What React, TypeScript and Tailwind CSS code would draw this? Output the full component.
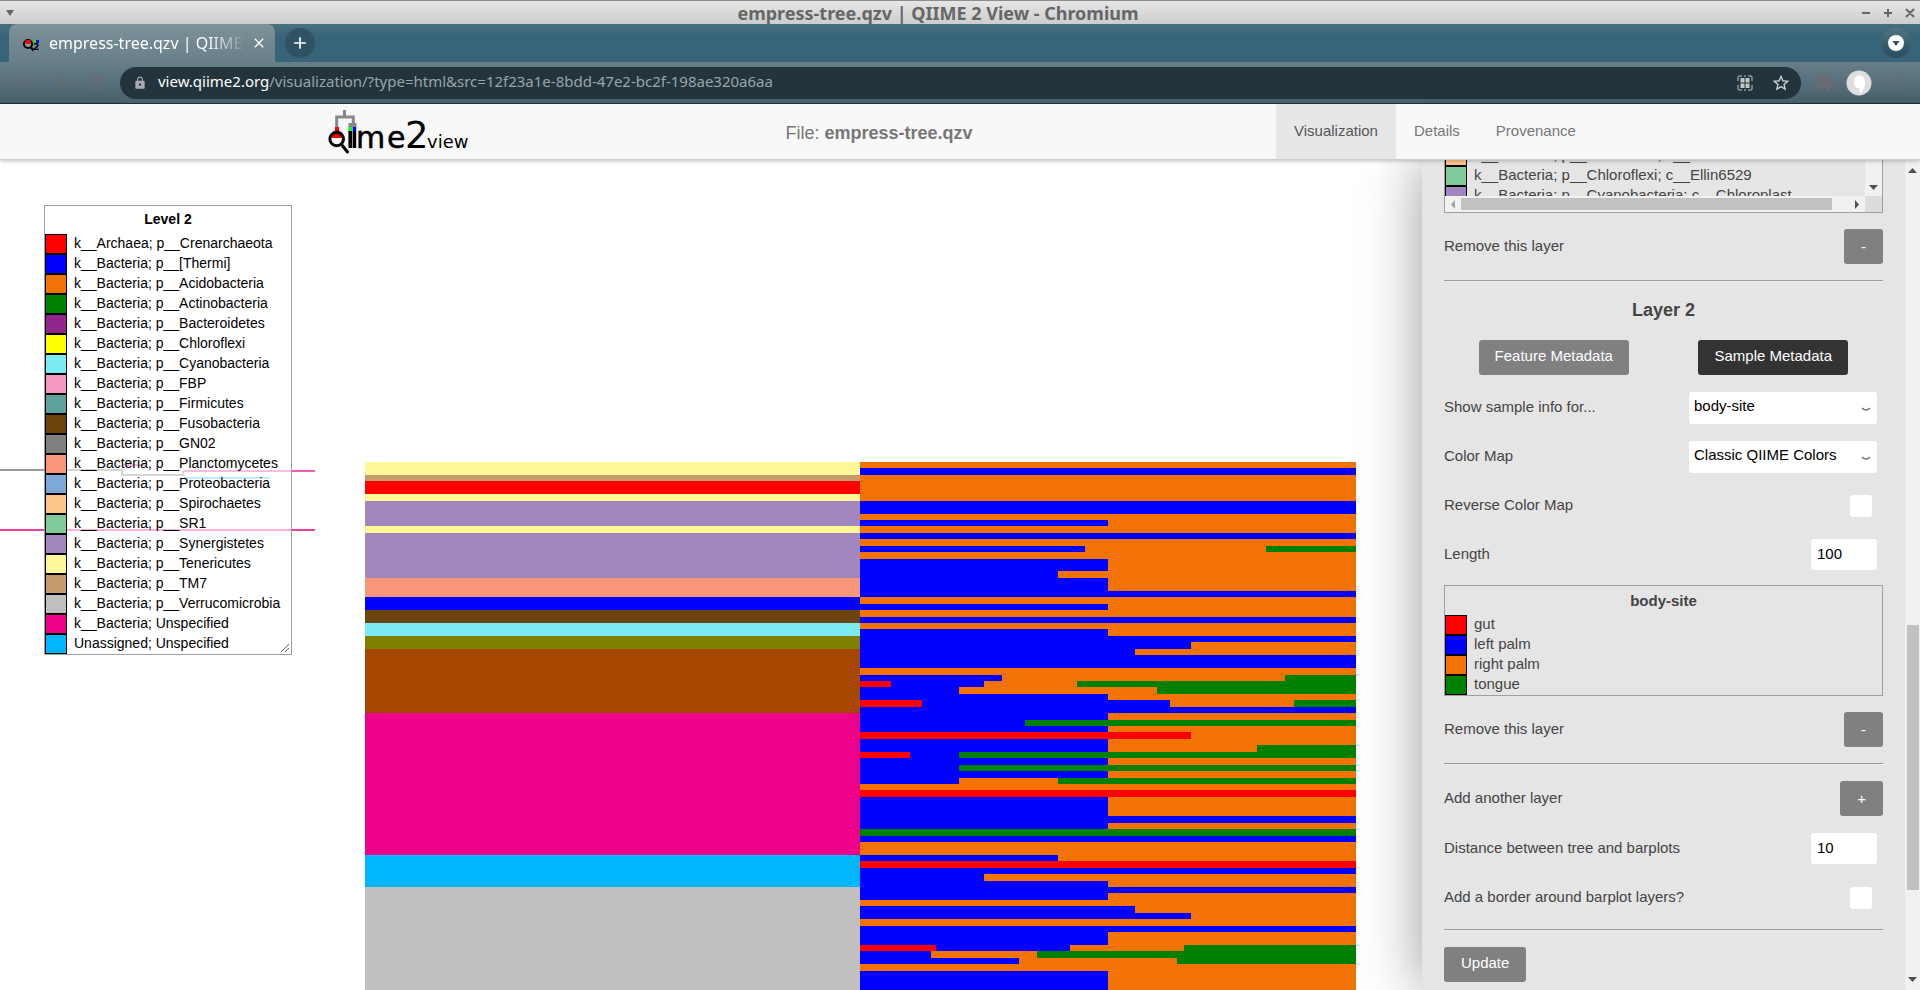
import { Fragment, useId } from 'react';
import type { ReactNode } from 'react';
import {
  MdAdd,
  MdArrowBack,
  MdArrowForward,
  MdClose,
  MdExtension,
  MdLock,
  MdMoreVert,
  MdRefresh,
  MdStarBorder,
} from 'react-icons/md';

type LegendItem = { color: string; label: string };

const LEVEL_2: LegendItem[] = [
  { color: '#ff0000', label: 'k__Archaea; p__Crenarchaeota' },
  { color: '#0000ff', label: 'k__Bacteria; p__[Thermi]' },
  { color: '#f27304', label: 'k__Bacteria; p__Acidobacteria' },
  { color: '#008000', label: 'k__Bacteria; p__Actinobacteria' },
  { color: '#91278d', label: 'k__Bacteria; p__Bacteroidetes' },
  { color: '#ffff00', label: 'k__Bacteria; p__Chloroflexi' },
  { color: '#7cecf4', label: 'k__Bacteria; p__Cyanobacteria' },
  { color: '#f49ac2', label: 'k__Bacteria; p__FBP' },
  { color: '#5da09e', label: 'k__Bacteria; p__Firmicutes' },
  { color: '#6b440b', label: 'k__Bacteria; p__Fusobacteria' },
  { color: '#808080', label: 'k__Bacteria; p__GN02' },
  { color: '#f79679', label: 'k__Bacteria; p__Planctomycetes' },
  { color: '#7da9d8', label: 'k__Bacteria; p__Proteobacteria' },
  { color: '#fcc688', label: 'k__Bacteria; p__Spirochaetes' },
  { color: '#80c99b', label: 'k__Bacteria; p__SR1' },
  { color: '#a287bf', label: 'k__Bacteria; p__Synergistetes' },
  { color: '#fff899', label: 'k__Bacteria; p__Tenericutes' },
  { color: '#c49c6b', label: 'k__Bacteria; p__TM7' },
  { color: '#c0c0c0', label: 'k__Bacteria; p__Verrucomicrobia' },
  { color: '#ed008a', label: 'k__Bacteria; Unspecified' },
  { color: '#00b6ff', label: 'Unassigned; Unspecified' },
];

const LAYER_1: LegendItem[] = [
  { color: '#fcc688', label: 'k__Bacteria; p__Chloroflexi; c__Anaerolineae' },
  { color: '#80c99b', label: 'k__Bacteria; p__Chloroflexi; c__Ellin6529' },
  { color: '#a287bf', label: 'k__Bacteria; p__Cyanobacteria; c__Chloroplast' },
];

const BODY_SITES: LegendItem[] = [
  { color: '#ff0000', label: 'gut' },
  { color: '#0000ff', label: 'left palm' },
  { color: '#f27304', label: 'right palm' },
  { color: '#008000', label: 'tongue' },
];

// [color, number of tips]
const FEATURE_BARS: [string, number][] = [
  ['#fff899', 2],
  ['#c49c6b', 1],
  ['#ff0000', 2],
  ['#fff899', 1],
  ['#a287bf', 4],
  ['#fff899', 1],
  ['#a287bf', 7],
  ['#f79679', 3],
  ['#0000ff', 2],
  ['#6b440b', 2],
  ['#7cecf4', 2],
  ['#808000', 2],
  ['#a54700', 10],
  ['#ed008a', 22],
  ['#00b6ff', 5],
  ['#c0c0c0', 30],
];

const SITE_COLORS: Record<string, string> = {
  R: '#ff0000',
  B: '#0000ff',
  O: '#f27304',
  G: '#008000',
};

// One entry per run of equal tips: [tips, [site, end fraction]...]
type SampleRun = [number, ...[string, number][]];

const SAMPLE_BARS: SampleRun[] = [
  [1, ['O', 1]],
  [1, ['B', 1]],
  [4, ['O', 1]],
  [2, ['B', 1]],
  [1, ['O', 1]],
  [1, ['B', 0.5], ['O', 1]],
  [1, ['O', 1]],
  [1, ['B', 1]],
  [1, ['O', 1]],
  [1, ['B', 0.4545], ['O', 0.8182], ['G', 1]],
  [1, ['O', 1]],
  [2, ['B', 0.5], ['O', 1]],
  [1, ['B', 0.4], ['O', 1]],
  [2, ['B', 0.5], ['O', 1]],
  [1, ['B', 1]],
  [1, ['O', 1]],
  [1, ['B', 0.5], ['O', 1]],
  [1, ['O', 1]],
  [1, ['B', 1]],
  [1, ['O', 1]],
  [1, ['B', 0.5], ['O', 1]],
  [1, ['B', 1]],
  [1, ['B', 0.6667], ['O', 1]],
  [1, ['B', 0.5556], ['O', 1]],
  [2, ['B', 1]],
  [1, ['O', 1]],
  [1, ['B', 0.2857], ['O', 0.8571], ['G', 1]],
  [1, ['R', 0.0625], ['B', 0.25], ['O', 0.4375], ['G', 1]],
  [1, ['B', 0.2], ['O', 0.6], ['G', 1]],
  [1, ['B', 0.5], ['O', 1]],
  [1, ['R', 0.125], ['B', 0.625], ['O', 0.875], ['G', 1]],
  [1, ['B', 1]],
  [1, ['B', 0.5], ['O', 1]],
  [1, ['B', 0.3333], ['G', 1]],
  [1, ['B', 0.5], ['O', 1]],
  [1, ['R', 0.6667], ['O', 1]],
  [1, ['B', 0.5], ['O', 1]],
  [1, ['B', 0.5], ['O', 0.8], ['G', 1]],
  [1, ['R', 0.1], ['B', 0.2], ['G', 1]],
  [1, ['B', 0.5], ['O', 1]],
  [1, ['B', 0.2], ['G', 1]],
  [1, ['B', 0.5], ['O', 1]],
  [1, ['B', 0.2], ['O', 0.4], ['G', 1]],
  [1, ['O', 1]],
  [1, ['R', 1]],
  [3, ['B', 0.5], ['O', 1]],
  [1, ['B', 1]],
  [1, ['B', 0.5], ['O', 1]],
  [1, ['G', 1]],
  [1, ['B', 1]],
  [2, ['O', 1]],
  [1, ['B', 0.4], ['O', 1]],
  [1, ['R', 1]],
  [1, ['B', 1]],
  [1, ['B', 0.25], ['O', 1]],
  [1, ['B', 0.5], ['O', 1]],
  [1, ['B', 1]],
  [1, ['B', 0.5], ['O', 1]],
  [1, ['O', 1]],
  [1, ['B', 0.5556], ['O', 1]],
  [1, ['B', 0.6667], ['O', 1]],
  [1, ['O', 1]],
  [1, ['B', 1]],
  [2, ['B', 0.5], ['O', 1]],
  [1, ['R', 0.1538], ['B', 0.4231], ['O', 0.6538], ['G', 1]],
  [1, ['B', 0.1429], ['O', 0.3571], ['G', 1]],
  [1, ['B', 0.32], ['O', 0.64], ['G', 1]],
  [1, ['O', 1]],
  [16, ['B', 0.5], ['O', 1]],
];

const TIP_HEIGHT = 6.44;
const BAR_TOP = 302;
const BAR_LEFT = 365;
const BAR_WIDTH = 495.3;

const TreeCanvas = () => {
  let featureRow = 0;
  let sampleRow = 0;

  return (
    <svg className="absolute inset-0 w-full h-full" shapeRendering="crispEdges" aria-label="Phylogenetic tree with barplots">
      <g fill="none" strokeWidth="2">
        <path d="M0 310h122v5h61v-4" stroke="#999" />
        <path d="M123 305h22M183 311h132" stroke="#f45db0" />
        <path d="M184 318h86" stroke="#5fd0f7" />
        <path d="M0 370h315" stroke="#ee3fa5" />
      </g>
      {FEATURE_BARS.map(([color, tips], i) => {
        const y = BAR_TOP + featureRow * TIP_HEIGHT;
        featureRow += tips;
        return <rect key={i} x={BAR_LEFT} y={y} width={BAR_WIDTH} height={tips * TIP_HEIGHT} fill={color} />;
      })}
      {SAMPLE_BARS.map(([tips, ...parts], i) => {
        const y = BAR_TOP + sampleRow * TIP_HEIGHT;
        sampleRow += tips;
        let start = 0;
        return (
          <Fragment key={i}>
            {parts.map(([site, end]) => {
              const x = BAR_LEFT + BAR_WIDTH + start * BAR_WIDTH;
              const width = (end - start) * BAR_WIDTH;
              start = end;
              return <rect key={site} x={x} y={y} width={width} height={tips * TIP_HEIGHT} fill={SITE_COLORS[site]} />;
            })}
          </Fragment>
        );
      })}
    </svg>
  );
};

const LegendRows = ({ items }: { items: LegendItem[] }) => (
  <ul>
    {items.map((item) => (
      <li key={item.label} className="flex gap-[7px] h-5 leading-[18px] whitespace-nowrap">
        <span className="w-[22px] h-5 shrink-0 border border-black" style={{ backgroundColor: item.color }} />
        {item.label}
      </li>
    ))}
  </ul>
);

const QiimeLogo = () => (
  <svg width="140" height="48" viewBox="0 0 140 48" aria-label="QIIME 2 view">
    <path d="M16.500 2v7M8.700 22V9h16.600v9" fill="none" stroke="#888" strokeWidth="3" />
    <path d="M20.500 15h8v4h-8z" fill="#888" />
    <path d="M7 19h4v5h3v6H4v-6h3z" fill="#f00" />
    <circle cx="8.700" cy="31" r="6.800" fill="none" stroke="#000" strokeWidth="3" />
    <path d="M13.500 36.500l6 7.500" stroke="#000" strokeWidth="3" strokeLinecap="round" />
    <path d="M20.400 19h3.600v4h-3.600z" fill="#0f0" />
    <path d="M24.600 19h3.600v4h-3.600z" fill="#00f" />
    <path d="M20.400 23h3.600v17h-3.600zM24.600 23h3.600v17h-3.600z" fill="#000" />
    <g fontFamily="'DejaVu Sans', sans-serif" fill="#000">
      <text x="28" y="40" fontSize="30" stroke="#000" strokeWidth="0.500">m</text>
      <text x="59" y="40" fontSize="30" stroke="#000" strokeWidth="0.500">e</text>
      <text x="77" y="40" fontSize="37">2</text>
      <text x="99" y="40" fontSize="18">view</text>
    </g>
  </svg>
);

const Favicon = () => (
  <svg width="18" height="20" viewBox="0 0 18 20" aria-hidden="true">
    <path d="M4 6V2h9v5" fill="none" stroke="#888" />
    <circle cx="6" cy="11" r="4" fill="#8d9ca3" stroke="#000" strokeWidth="2" />
    <path d="M3.500 7h5v4h-5z" fill="#f00" />
    <path d="M8.500 14l3 3.500" stroke="#000" strokeWidth="2" />
    <path d="M11.500 7h2.500v3h-2.500z" fill="#0f0" />
    <path d="M14 7h3v3h-3z" fill="#00f" />
    <text x="11" y="17" fontSize="9" fontWeight="700" fontFamily="DejaVu Sans">2</text>
  </svg>
);

const WindowTitleBar = () => (
  <div className="flex items-center h-6 px-[5px] border-t border-[#8f8b90] bg-linear-to-b from-[#e6e6e6] to-[#cdcdcd] text-[#666]">
    <svg className="w-[10px] h-[6px]" viewBox="0 0 10 6" aria-hidden="true">
      <path d="M1 0h8L5 6z" fill="#666" />
    </svg>
    <span className="flex-1 text-center font-['Noto_Sans'] text-[18px] leading-5 font-bold">
      empress-tree.qzv | QIIME 2 View - Chromium
    </span>
    <svg className="w-[54px] h-[10px]" viewBox="0 0 54 10" aria-hidden="true">
      <path d="M1 5h8M23 5h8M27 1v8M45 1l8 8M53 1l-8 8" stroke="#666" strokeWidth="2" />
    </svg>
  </div>
);

const TabStrip = () => (
  <div className="flex items-center h-[38px] pl-[9px] pr-[9px] bg-linear-to-b from-[#47707f] to-[#376478] to-35%">
    <div className="flex items-center w-[266px] h-full pl-[13px] pr-2 rounded-t-lg bg-linear-to-b from-[#7d9198] to-[#687f8a] text-white">
      <Favicon />
      <span className="flex-1 ml-[9px] overflow-hidden whitespace-nowrap font-['Noto_Sans'] text-[16px] mask-r-from-80%">
        empress-tree.qzv | QIIME 2 View
      </span>
      <button aria-label="Close tab" className="ml-1">
        <MdClose size={16} />
      </button>
    </div>
    <button aria-label="New tab" className="flex items-center justify-center size-[30px] ml-[10px] rounded-full bg-[#2f5364] text-white">
      <MdAdd size={20} />
    </button>
    <button aria-label="Search tabs" className="flex items-center justify-center size-[30px] ml-auto rounded-full bg-linear-to-b from-[#4f7482] to-[#294c5c]">
      <svg width="16" height="16" viewBox="0 0 16 16" aria-hidden="true">
        <circle cx="8" cy="8" r="8" fill="#fff" />
        <path d="M4.500 6h7L8 11z" fill="#2f5364" />
      </svg>
    </button>
  </div>
);

const Toolbar = () => (
  <div className="flex items-center h-[42px] pl-[14px] pr-3 border-b border-[#1f333d] bg-linear-to-b from-[#687f8a] to-[#46606b] text-[#6b6a70]">
    <div className="flex gap-4 w-[106px]">
      <button aria-label="Back"><MdArrowBack size={20} /></button>
      <button aria-label="Forward"><MdArrowForward size={20} /></button>
      <button aria-label="Reload"><MdRefresh size={20} /></button>
    </div>
    <div className="flex items-center flex-1 h-8 pl-[13px] pr-[10px] rounded-full bg-[#24343d] text-[#9aa5aa]">
      <MdLock size={14} className="text-[#a9a9b2]" />
      <span className="flex-1 ml-[11px] pb-[2px] font-['Noto_Sans'] text-[15px]">
        <span className="text-white">view.qiime2.org</span>
        /visualization/?type=html&amp;src=12f23a1e-8bdd-47e2-bc2f-198ae320a6aa
      </span>
      <svg width="16" height="16" viewBox="0 0 16 16" className="mr-[18px]" aria-hidden="true">
        <path d="M1 6V2q0-1 1-1h3M11 1h3q1 0 1 1v4M15 10v4q0 1-1 1h-3M5 15H2q-1 0-1-1v-4M7 1h2M7 15h2" fill="none" stroke="#c3c6c8" />
        <path d="M3.500 3h4v4.500h-4zM8.500 3h4v4.500h-4zM3.500 8.500h4V13h-4zM8.500 8.500h4V13h-4z" fill="#c3c6c8" />
      </svg>
      <button aria-label="Bookmark" className="text-[#d0d3d4]"><MdStarBorder size={20} /></button>
    </div>
    <button aria-label="Extensions" className="ml-[14px]"><MdExtension size={19} /></button>
    <svg width="26" height="26" viewBox="0 0 26 26" className="ml-3" aria-label="Profile">
      <circle cx="13" cy="13" r="12.500" fill="#dedede" />
      <path d="M8 12c0-9 11-9 11 0 0 5-1 9-5 11l-1-5c-3 0-5-2-5-6z" fill="#fff" />
    </svg>
    <button aria-label="Menu" className="ml-4"><MdMoreVert size={20} /></button>
  </div>
);

const PageHeader = () => (
  <header className="relative z-10 h-14 shrink-0 border-b border-[#ccc] bg-[#f8f8f8] text-[#777] shadow-[0_1px_4px_rgba(0,0,0,0.25)]">
    <div className="flex max-w-[1264px] h-full mx-auto">
      <a href="#home" className="w-[154px] pt-1"><QiimeLogo /></a>
      <p className="flex-1 self-center pt-1 text-center text-[18px]">
        File: <strong>empress-tree.qzv</strong>
      </p>
      <nav className="flex w-[316px] leading-[54px]">
        <a href="#visualization" className="px-[18px] bg-[#e7e7e7] text-[#555]">Visualization</a>
        <a href="#details" className="px-[18px]">Details</a>
        <a href="#provenance" className="px-[18px]">Provenance</a>
      </nav>
    </div>
  </header>
);

const Row = ({ label, children }: { label: string; children: (id: string) => ReactNode }) => {
  const id = useId();
  return (
    <div className="flex items-center justify-between h-[49px] pr-[6px]">
      <label htmlFor={id}>{label}</label>
      {children(id)}
    </div>
  );
};

const Dropdown = ({ id, value }: { id: string; value: string }) => (
  <div className="grid items-center">
    <select id={id} className="col-start-1 row-start-1 appearance-none w-[188px] h-8 pl-[5px] pb-[2px] rounded-[3px] bg-white text-black">
      <option>{value}</option>
    </select>
    <svg className="col-start-1 row-start-1 justify-self-end mr-[6px] mt-1 pointer-events-none" width="10" height="5" viewBox="0 0 10 5" aria-hidden="true">
      <path d="M1 1q4 4 8 0" fill="none" stroke="#777" strokeWidth="1.500" />
    </svg>
  </div>
);

const NumberBox = ({ id, value }: { id: string; value: string }) => (
  <input id={id} defaultValue={value} className="w-[66px] h-[31px] pl-[6px] pb-[2px] rounded-[3px] bg-white text-black" />
);

const Tick = ({ id }: { id: string }) => (
  <input id={id} type="checkbox" className="appearance-none size-[22px] mr-[5px] rounded-[3px] bg-white" />
);

const LayerButton = ({ text, sign }: { text: string; sign: string }) => (
  <div className="flex justify-between h-[35px] mt-4 leading-[34px]">
    <span>{text}</span>
    <button aria-label={text} className="px-[17px] rounded-[3px] bg-[#808080] text-white">{sign}</button>
  </div>
);

const Divider = () => <hr className="h-[2px] mt-4 border-0 border-t border-[#999] bg-[#eee]" />;

const SideScrollbar = () => (
  <div className="flex flex-col items-center w-[15px] shrink-0 py-2 bg-[#f1f1f1]" aria-hidden="true">
    <svg width="9" height="5" viewBox="0 0 9 5"><path d="M0 5l4.500-5L9 5z" fill="#505050" /></svg>
    <div className="grow-[452]" />
    <div className="grow-[265] w-3 bg-[#c1c1c1]" />
    <div className="grow-[87]" />
    <svg width="9" height="5" viewBox="0 0 9 5"><path d="M0 0l4.500 5L9 0z" fill="#505050" /></svg>
  </div>
);

const ListScrollbar = () => (
  <div className="flex items-center h-4 bg-[#f1f1f1]" aria-hidden="true">
    <svg width="16" height="9" viewBox="0 0 16 9"><path d="M10 0L6 4.500 10 9z" fill="#a3a3a3" /></svg>
    <div className="w-[371px] h-3 bg-[#c1c1c1]" />
    <svg className="ml-auto mr-1" width="9" height="9" viewBox="0 0 9 9"><path d="M3 0l4 4.500L3 9z" fill="#505050" /></svg>
    <div className="w-[17px] h-4 bg-[#dcdcdc]" />
  </div>
);

const SidePanel = () => (
  <aside className="relative flex w-[498px] shrink-0 bg-[#e5e5e5] text-[#444] shadow-[0_0_56px_rgba(0,0,0,0.4)]">
    <div className="flex-1 px-[22px] overflow-hidden">
      <div className="border border-t-0 border-[#a0a0a0]">
        <div className="flex justify-between h-9 overflow-hidden">
          <div className="-mt-[14px]">
            <LegendRows items={LAYER_1} />
          </div>
          <div className="flex items-end justify-center w-[17px] pb-[6px] bg-[#f1f1f1]">
            <svg width="9" height="5" viewBox="0 0 9 5" aria-hidden="true"><path d="M0 0l4.500 5L9 0z" fill="#505050" /></svg>
          </div>
        </div>
        <ListScrollbar />
      </div>

      <LayerButton text="Remove this layer" sign="-" />
      <Divider />

      <h2 className="mt-3 text-center text-[18px] leading-8 font-bold">Layer 2</h2>
      <div className="flex justify-around h-[35px] mt-[14px] mb-2 text-white">
        <button className="w-[150px] pb-[2px] rounded-[3px] bg-[#808080]">Feature Metadata</button>
        <button className="w-[150px] pb-[2px] rounded-[3px] bg-[#333]">Sample Metadata</button>
      </div>

      <Row label="Show sample info for...">{(id) => <Dropdown id={id} value="body-site" />}</Row>
      <Row label="Color Map">{(id) => <Dropdown id={id} value="Classic QIIME Colors" />}</Row>
      <Row label="Reverse Color Map">{(id) => <Tick id={id} />}</Row>
      <Row label="Length">{(id) => <NumberBox id={id} value="100" />}</Row>

      <div className="mt-[6px] border border-[#a0a0a0]">
        <h3 className="text-center leading-[29px] font-bold">body-site</h3>
        <LegendRows items={BODY_SITES} />
      </div>

      <LayerButton text="Remove this layer" sign="-" />
      <Divider />
      <LayerButton text="Add another layer" sign="+" />

      <div className="mt-2 mb-[-9px]">
        <Row label="Distance between tree and barplots">{(id) => <NumberBox id={id} value="10" />}</Row>
        <Row label="Add a border around barplot layers?">{(id) => <Tick id={id} />}</Row>
      </div>
      <Divider />
      <button className="h-[35px] mt-4 px-[17px] pb-[2px] rounded-[3px] bg-[#808080] text-white">Update</button>
    </div>
    <SideScrollbar />
  </aside>
);

export default function App() {
  return (
    <div className="flex flex-col h-screen overflow-hidden bg-white font-['Liberation_Sans',sans-serif] text-[15px]">
      <WindowTitleBar />
      <TabStrip />
      <Toolbar />
      <PageHeader />
      <div className="flex flex-1 min-h-0">
        <main className="relative flex-1 min-w-0 overflow-hidden">
          <TreeCanvas />
          <section className="absolute left-11 top-[45px] w-[248px] border border-[#a0a0a0] bg-white/60 text-[14px] text-black">
            <h2 className="h-7 text-center leading-[26px] font-bold">Level 2</h2>
            <LegendRows items={LEVEL_2} />
            <svg className="absolute right-[2px] bottom-[2px]" width="8" height="8" viewBox="0 0 8 8" aria-hidden="true">
              <path d="M0 8l8-8M4 8l4-4" stroke="#666" />
            </svg>
          </section>
        </main>
        <SidePanel />
      </div>
    </div>
  );
}
